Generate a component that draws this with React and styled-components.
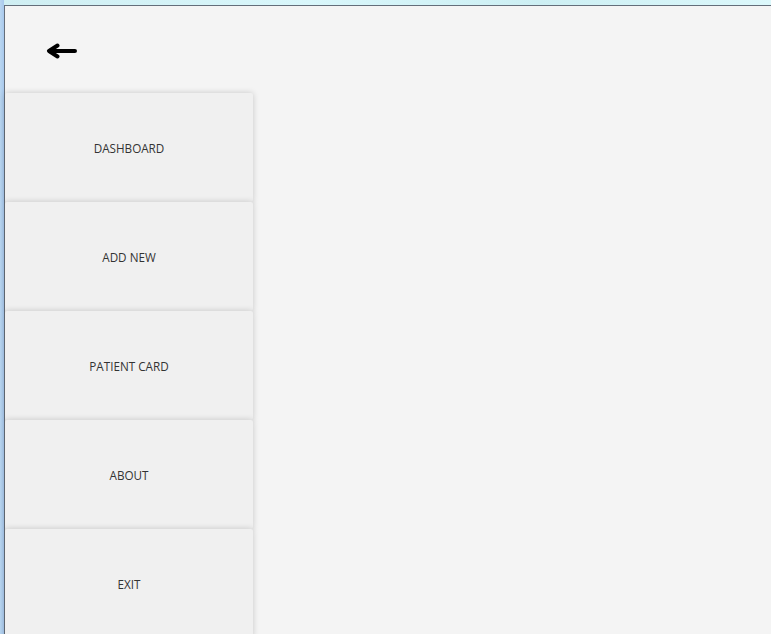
import React from "react";
import styled, { createGlobalStyle } from "styled-components";

const Global = createGlobalStyle`
  html, body { margin: 0; padding: 0; overflow: hidden; }
  body { font-family: "Open Sans", "Noto Sans", sans-serif; }
`;

const Desktop = styled.div`
  width: 771px;
  height: 634px;
  box-sizing: border-box;
  padding: 5px 0 0 4px;
  background:
    linear-gradient(90deg, #b9d6f0 0px, #a8c8ec 4px, transparent 4px),
    linear-gradient(90deg, #cfeef2 0%, #d9f7fb 40%, #cdeff3 70%, #dcf8fb 100%);
  overflow: hidden;
`;

const Window = styled.div`
  height: 100%;
  box-sizing: border-box;
  border-top: 1px solid #646e7a;
  border-left: 1px solid #646e7a;
  background: #f4f4f4;
  display: flex;
  flex-direction: column;
`;

const Header = styled.div`
  height: 87px;
  display: flex;
  align-items: center;
  padding-left: 40px;
  padding-top: 2px;
  box-sizing: border-box;
  flex-shrink: 0;
`;

const BackButton = styled.button`
  border: none;
  background: transparent;
  padding: 0;
  width: 32px;
  height: 16px;
  display: flex;
  align-items: center;
  cursor: pointer;
`;

const Menu = styled.nav`
  width: 248px;
  display: flex;
  flex-direction: column;
`;

const MenuItem = styled.button`
  height: 109px;
  border: none;
  border-radius: 2px;
  background: #f0f0f0;
  box-shadow: 0 0 6px rgba(0, 0, 0, 0.18);
  font-family: "Open Sans", "Noto Sans", sans-serif;
  font-size: 11.7px;
  color: #333;
  text-transform: uppercase;
  cursor: pointer;
  flex-shrink: 0;
  padding-top: 1px;
`;

const items = ["Dashboard", "Add New", "Patient Card", "About", "Exit"];

export default function App() {
  return (
    <>
      <Global />
      <Desktop>
        <Window>
          <Header>
            <BackButton aria-label="back">
              <svg width="32" height="16" viewBox="0 0 32 16">
                <path d="M30 8 H6 M12.5 2.5 L4 8 L12.5 13.5" fill="none" stroke="#000" strokeWidth="4" strokeLinecap="round" strokeLinejoin="round" />
              </svg>
            </BackButton>
          </Header>
          <Menu>
            {items.map((t) => (
              <MenuItem key={t}>{t}</MenuItem>
            ))}
          </Menu>
        </Window>
      </Desktop>
    </>
  );
}
